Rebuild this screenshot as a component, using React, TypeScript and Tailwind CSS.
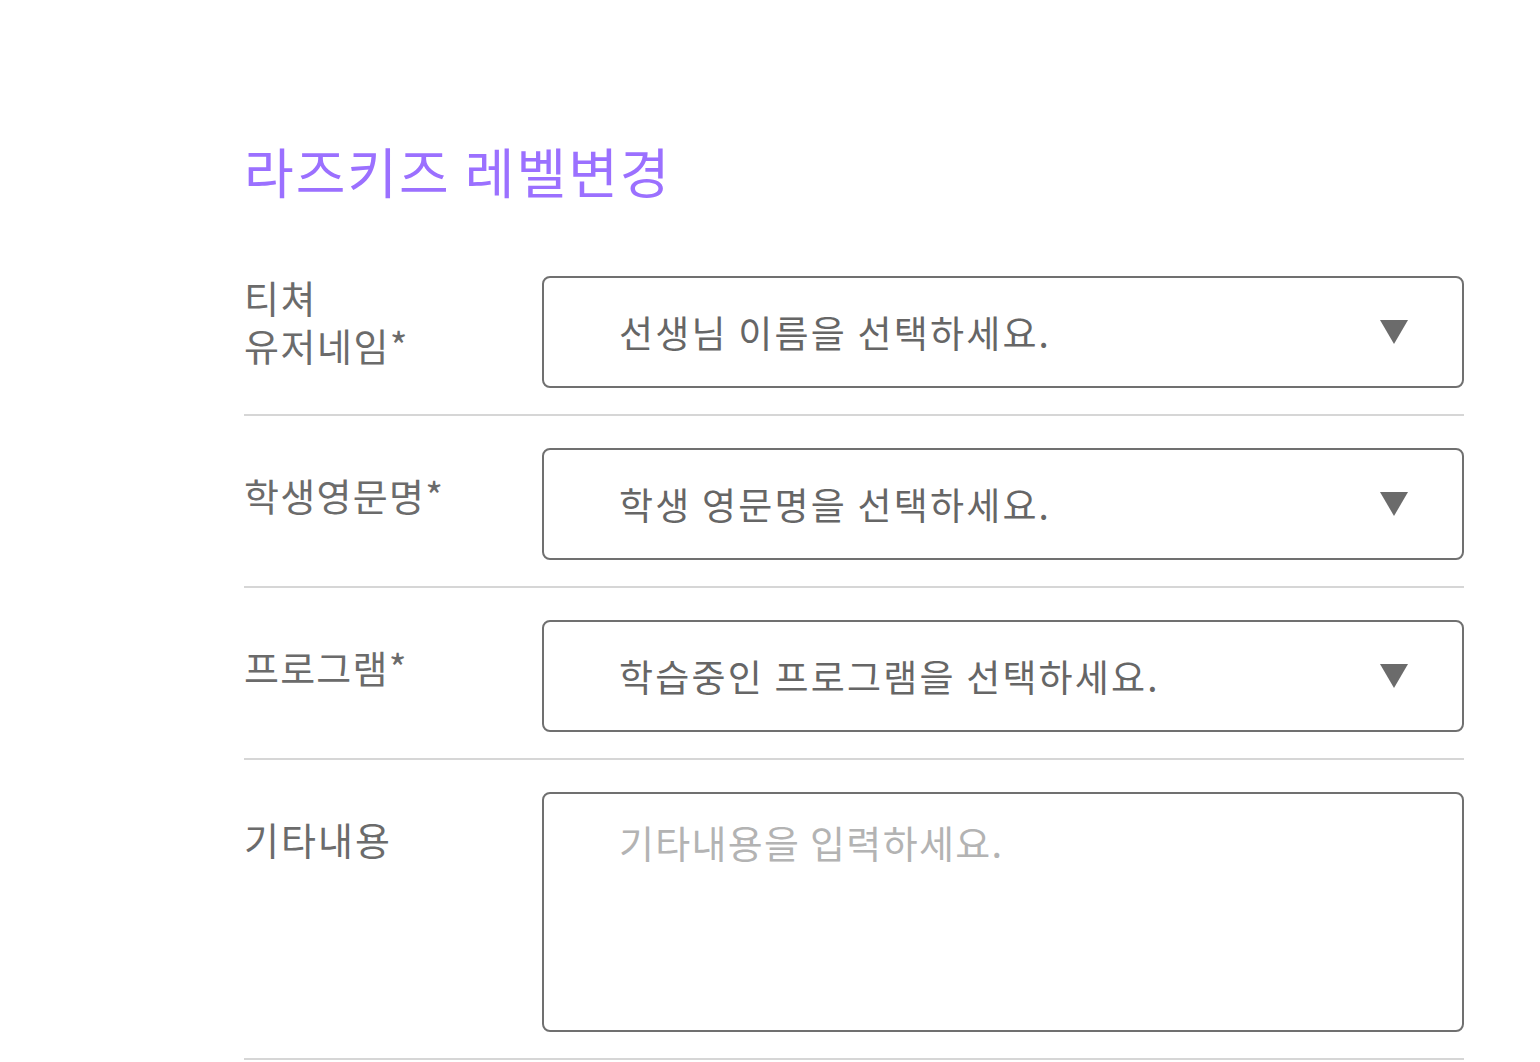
import { useState } from 'react';

const font = "font-['Noto_Sans_CJK_KR','Noto_Sans',sans-serif]";

function Arrow() {
  return (
    <svg width="28" height="24" viewBox="0 0 28 24" className="shrink-0">
      <polygon points="0,0 28,0 14,24" fill="#6b6b6b" />
    </svg>
  );
}

function SelectBox({ placeholder }: { placeholder: string }) {
  return (
    <div className="flex h-[112px] flex-1 items-center justify-between rounded-[8px] border-2 border-[#707070] pl-[75px] pr-[54px]">
      <span className="text-[37px] leading-none tracking-[2.2px] text-[#666666]">{placeholder}</span>
      <Arrow />
    </div>
  );
}

export default function App() {
  const [memo, setMemo] = useState('');

  return (
    <main className={`min-h-screen bg-white ${font}`}>
      <div className="ml-[244px] w-[1220px] pt-[133px]">
        <h1 className="text-[54px] font-normal leading-[76px] tracking-[2px] text-[#9b70ff]">라즈키즈 레벨변경</h1>

        <div className="mt-[67px]">
          {/* Teacher */}
          <div className="flex border-b-2 border-[#d6d6d6] pb-[26px]">
            <div className="-mt-[3px] w-[298px] shrink-0 text-[38px] leading-[48px] tracking-[1.5px] text-[#6b6b6b]">
              <div>티쳐</div>
              <div>유저네임*</div>
            </div>
            <SelectBox placeholder="선생님 이름을 선택하세요." />
          </div>

          {/* Student */}
          <div className="flex border-b-2 border-[#d6d6d6] pb-[26px] pt-[32px]">
            <div className="w-[298px] shrink-0 pt-[23px] text-[38px] leading-[48px] tracking-[1.3px] text-[#6b6b6b]">학생영문명*</div>
            <SelectBox placeholder="학생 영문명을 선택하세요." />
          </div>

          {/* Program */}
          <div className="flex border-b-2 border-[#d6d6d6] pb-[26px] pt-[32px]">
            <div className="w-[298px] shrink-0 pt-[23px] text-[38px] leading-[48px] tracking-[1.2px] text-[#6b6b6b]">프로그램*</div>
            <SelectBox placeholder="학습중인 프로그램을 선택하세요." />
          </div>

          {/* Memo */}
          <div className="flex border-b-2 border-[#d6d6d6] pb-[26px] pt-[32px]">
            <div className="w-[298px] shrink-0 pt-[23px] text-[38px] leading-[48px] tracking-[2px] text-[#6b6b6b]">기타내용</div>
            <textarea
              value={memo}
              onChange={(e) => setMemo(e.target.value)}
              placeholder="기타내용을 입력하세요."
              className={`h-[240px] flex-1 resize-none rounded-[8px] border-2 border-[#707070] pl-[75px] pr-[52px] pt-[21px] text-[38px] leading-[54px] tracking-[1.3px] text-[#666666] outline-none placeholder:text-[#b3b3b3] ${font}`}
            />
          </div>
        </div>
      </div>
    </main>
  );
}
